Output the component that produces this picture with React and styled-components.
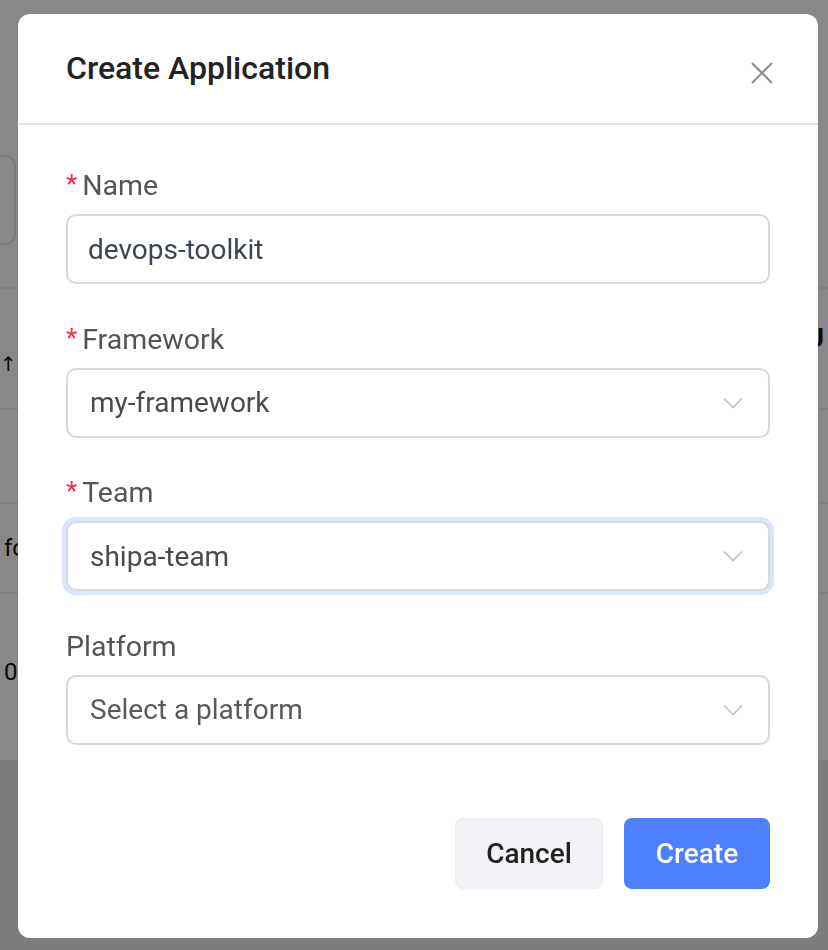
import React from "react";
import styled, { createGlobalStyle } from "styled-components";

const Global = createGlobalStyle`
  html, body { margin: 0; padding: 0; }
  body {
    font-family: Roboto, "Liberation Sans", Arial, sans-serif;
    background: #e9e9ea;
    overflow: hidden;
  }
  * { box-sizing: border-box; }
`;

/* ---------- page behind the dialog ---------- */
const BackPage = styled.div`
  width: 828px;
  height: 950px;
  display: flex;
  flex-direction: column;
  background: #e9e9ea;
  overflow: hidden;
`;

const Content = styled.div`
  background: #ffffff;
  height: 760px;
  padding-top: 155px;
  display: flex;
  flex-direction: column;
`;

const SearchBox = styled.div`
  width: 216px;
  height: 90px;
  margin-left: -200px;
  border: 2px solid #e6e6e6;
  border-radius: 10px;
`;

const Table = styled.div`
  margin-top: 42px;
  display: flex;
  flex-direction: column;
`;

const Row = styled.div`
  height: ${(p) => p.$h}px;
  border-top: 2px solid #efefef;
  display: flex;
  align-items: ${(p) => (p.$top ? "flex-start" : "center")};
  padding-top: ${(p) => (p.$top ? "64px" : "0")};
  justify-content: space-between;
  padding-left: 4px;
  font-size: 24px;
  color: #111;
`;

const SortArrow = styled.span`
  font-family: "DejaVu Sans", sans-serif;
  font-size: 20px;
  margin-top: 30px;
  margin-left: -4px;
`;

const HeadText = styled.span`
  font-weight: 700;
  font-size: 26px;
  margin-right: 4px;
  margin-top: -22px;
`;

/* ---------- overlay + dialog ---------- */
const Overlay = styled.div`
  position: fixed;
  inset: 0;
  background: rgba(0, 0, 0, 0.467);
`;

const Dialog = styled.div`
  position: fixed;
  left: 18px;
  top: 14px;
  width: 800px;
  background: #fff;
  border-radius: 12px;
  display: flex;
  flex-direction: column;
`;

const Header = styled.div`
  height: 111px;
  padding: 0 45px 0 48px;
  border-bottom: 2px solid #e3e3e3;
  display: flex;
  align-items: center;
  justify-content: space-between;
`;

const Title = styled.h2`
  margin: 0;
  margin-top: -2px;
  font-size: 32px;
  font-weight: 500;
  color: #232323;
`;

const CloseButton = styled.button`
  border: none;
  background: none;
  padding: 0;
  margin-top: 8px;
  width: 22px;
  height: 22px;
  display: flex;
  cursor: pointer;
`;

const Body = styled.div`
  padding: 45px 48px 0;
  display: flex;
  flex-direction: column;
  gap: 39.5px;
`;

const Field = styled.div`
  display: flex;
  flex-direction: column;
  gap: 12px;
`;

const Label = styled.label`
  height: 32px;
  line-height: 32px;
  font-size: 28.5px;
  color: #555;
  display: flex;
  align-items: center;
`;

const Required = styled.span`
  color: #f5294d;
  font-size: 26px;
  margin-right: 5px;
  position: relative;
  top: -2px;
`;

const Control = styled.div`
  height: 70px;
  border: 2px solid #d9d9d9;
  border-radius: 10px;
  display: flex;
  align-items: center;
  justify-content: space-between;
  padding: 0 24px 0 ${(p) => (p.$select ? "22px" : "20px")};
  font-size: 28px;
  color: ${(p) => (p.$placeholder ? "#595959" : p.$select ? "#474b50" : "#3d4551")};
  box-shadow: ${(p) => (p.$focused ? "0 0 0 4px #d8e6fb" : "none")};
`;

const Footer = styled.div`
  padding: 73.5px 48px 49px;
  display: flex;
  justify-content: flex-end;
  gap: 21px;
`;

const Button = styled.button`
  height: 71px;
  width: ${(p) => (p.$primary ? "146px" : "148px")};
  border-radius: 8px;
  border: 2px solid ${(p) => (p.$primary ? "#4e7fff" : "#efeff4")};
  background: ${(p) => (p.$primary ? "#4e7fff" : "#f3f3f7")};
  color: ${(p) => (p.$primary ? "#ffffff" : "#222")};
  font-family: Roboto, "Liberation Sans", Arial, sans-serif;
  font-size: 28px;
  font-weight: 500;
  cursor: pointer;
`;

const Chevron = () => (
  <svg width="22" height="14" viewBox="0 0 22 14" fill="none">
    <path d="M2 2.5 L11 11.5 L20 2.5" stroke="#c0c0c0" strokeWidth="1.6" />
  </svg>
);

const CloseIcon = () => (
  <svg width="22" height="22" viewBox="0 0 22 22" fill="none">
    <path d="M1 1 L21 21 M21 1 L1 21" stroke="#8c8c8c" strokeWidth="2" />
  </svg>
);

const fields = [
  { label: "Name", required: true, value: "devops-toolkit" },
  { label: "Framework", required: true, value: "my-framework", select: true },
  { label: "Team", required: true, value: "shipa-team", select: true, focused: true },
  { label: "Platform", value: "Select a platform", select: true, placeholder: true },
];

export default function App() {
  return (
    <>
      <Global />
      <BackPage>
        <Content>
          <SearchBox />
          <Table>
            <Row $h={121}>
              <SortArrow>↑</SortArrow>
              <HeadText>U</HeadText>
            </Row>
            <Row $h={94} />
            <Row $h={90}>
              <span>fo</span>
            </Row>
            <Row $h={168} $top>
              <span>0</span>
            </Row>
          </Table>
        </Content>
      </BackPage>
      <Overlay />
      <Dialog role="dialog">
        <Header>
          <Title>Create Application</Title>
          <CloseButton aria-label="Close">
            <CloseIcon />
          </CloseButton>
        </Header>
        <Body>
          {fields.map((f) => (
            <Field key={f.label}>
              <Label>
                {f.required && <Required>*</Required>}
                {f.label}
              </Label>
              <Control $select={f.select} $focused={f.focused} $placeholder={f.placeholder}>
                <span>{f.value}</span>
                {f.select && <Chevron />}
              </Control>
            </Field>
          ))}
        </Body>
        <Footer>
          <Button>Cancel</Button>
          <Button $primary>Create</Button>
        </Footer>
      </Dialog>
    </>
  );
}
